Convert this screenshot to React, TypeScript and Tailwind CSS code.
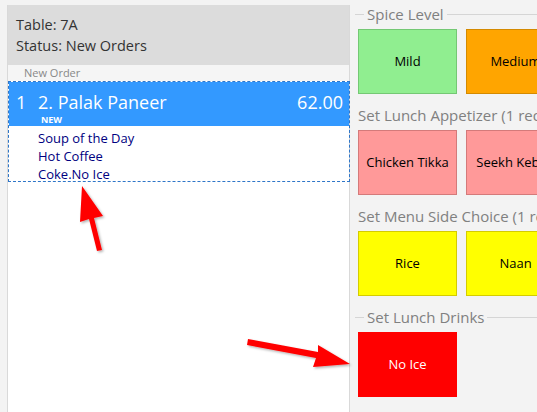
import React from "react";

const font = { fontFamily: '"Segoe UI", "Open Sans", "Noto Sans", sans-serif' };

interface Choice {
  label: string;
  className: string;
}

interface Group {
  title: string;
  choices: Choice[];
}

const groups: Group[] = [
  {
    title: "Spice Level",
    choices: [
      { label: "Mild", className: "bg-[#90ee90] border-[#74c874] text-black" },
      { label: "Medium", className: "bg-[#ffa500] border-[#d48a00] text-black" },
    ],
  },
  {
    title: "Set Lunch Appetizer (1 required)",
    choices: [
      { label: "Chicken Tikka", className: "bg-[#ff9999] border-[#d47a7a] text-black" },
      { label: "Seekh Kebab", className: "bg-[#ff9999] border-[#d47a7a] text-black" },
    ],
  },
  {
    title: "Set Menu Side Choice (1 required)",
    choices: [
      { label: "Rice", className: "bg-[#ffff00] border-[#d4cc00] text-black" },
      { label: "Naan", className: "bg-[#ffff00] border-[#d4cc00] text-black" },
    ],
  },
  {
    title: "Set Lunch Drinks",
    choices: [{ label: "No Ice", className: "bg-[#ff0000] border-[#ff0000] text-white" }],
  },
  { title: "Add Modifiers", choices: [] },
];

function GroupBox({ group }: { group: Group }) {
  return (
    <div className="flex flex-col mb-[11px]">
      {/* fieldset style title */}
      <div className="flex items-center h-[20px]">
        <div className="w-[9px] h-px bg-[#d5d5d5] ml-[5px]" />
        <span className="px-[3px] text-[15px] text-[#808080] whitespace-nowrap leading-none">
          {group.title}
        </span>
        <div className="flex-1 h-px bg-[#d5d5d5] min-w-[20px]" />
      </div>
      {group.choices.length > 0 && (
        <div className="flex gap-[9px] mt-[5px] pl-[8px]">
          {group.choices.map((c) => (
            <div
              key={c.label}
              className={`w-[99px] h-[65px] shrink-0 border flex items-center justify-center text-[13px] ${c.className}`}
            >
              {c.label}
            </div>
          ))}
        </div>
      )}
    </div>
  );
}

function Arrows() {
  return (
    <svg
      className="absolute inset-0 pointer-events-none"
      width={537}
      height={412}
      viewBox="0 0 537 412"
    >
      <defs>
        <filter id="sh" x="-20%" y="-20%" width="140%" height="140%">
          <feDropShadow dx="1.5" dy="1.5" stdDeviation="1" floodColor="#000" floodOpacity="0.3" />
        </filter>
      </defs>
      <g fill="#ff0000" filter="url(#sh)">
        <polygon points="82,186 103,216 94,218 102,250 97,251 89,219 80,222" />
        <polygon points="350,364 313,367 316,358 247,345 248,339 318,352 318,345" />
      </g>
    </svg>
  );
}

export default function App() {
  return (
    <div className="relative w-[537px] h-[412px] overflow-hidden bg-[#f3f3f3] flex" style={font}>
      {/* order panel */}
      <div className="w-[343px] ml-[7px] mt-[5px] flex flex-col bg-white border-l border-r border-[#d9d9d9]">
        <div className="h-[60px] bg-[#dcdcdc] flex flex-col justify-center pl-[8px] text-[14.5px] text-[#333] leading-[21px]">
          <span>Table: 7A</span>
          <span>Status: New Orders</span>
        </div>
        <div className="h-[16px] bg-[#f5f5f5] text-[11px] text-[#888] pl-[16px] leading-[16px]">
          New Order
        </div>
        <div className="border border-dashed border-[#2f76c8] mr-[-1px] h-[101px]">
          <div className="bg-[#3399ff] text-white h-[44px] relative">
            <div className="flex items-center text-[18px] leading-none pt-[11px]">
              <span className="w-[29px] pl-[7px]">1</span>
              <span className="flex-1">2. Palak Paneer</span>
              <span className="pr-[6px]">62.00</span>
            </div>
            <div className="absolute left-[32px] top-[33px] text-[9px] font-bold leading-none">NEW</div>
          </div>
          <div className="pl-[29px] pt-[3px] text-[13px] text-[#000080] leading-[18px]">
            <div>Soup of the Day</div>
            <div>Hot Coffee</div>
            <div>Coke.No Ice</div>
          </div>
        </div>
      </div>

      {/* modifier panel */}
      <div className="flex-1 pt-[4px] overflow-hidden">
        {groups.map((g) => (
          <GroupBox key={g.title} group={g} />
        ))}
      </div>

      <Arrows />
    </div>
  );
}
